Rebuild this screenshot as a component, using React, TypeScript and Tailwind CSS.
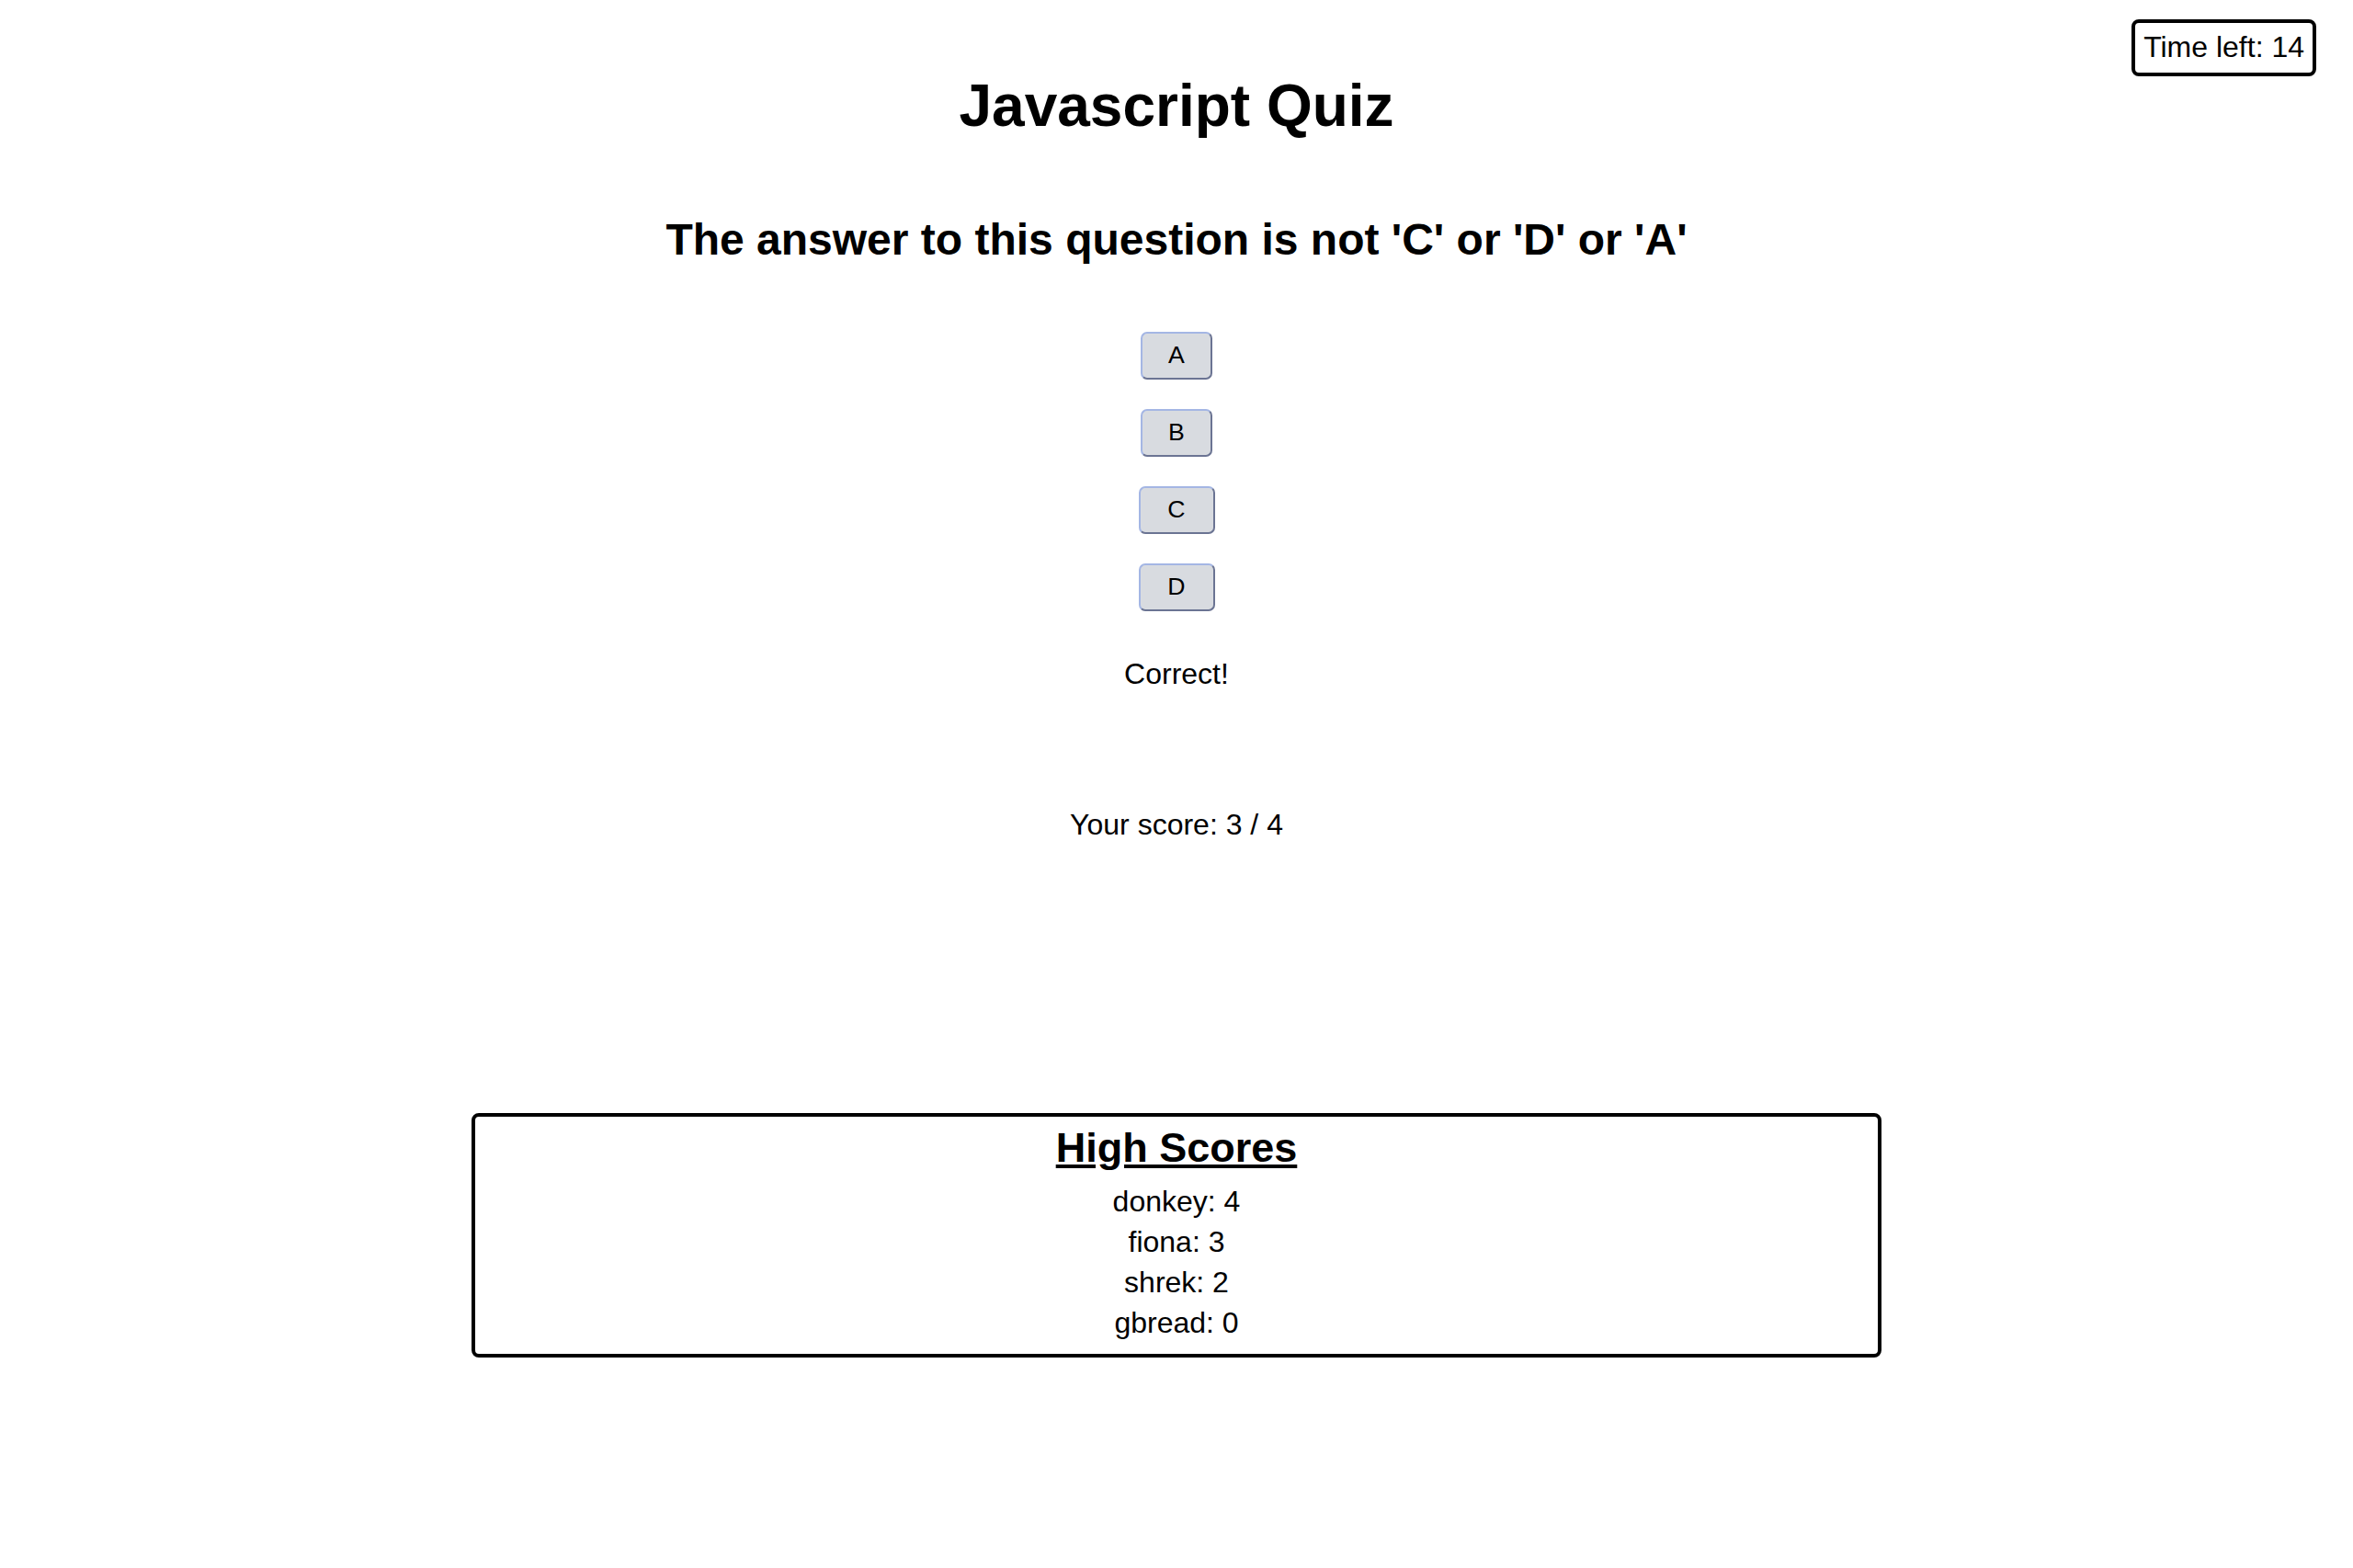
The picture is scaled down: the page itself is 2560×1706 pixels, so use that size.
const choices = [
  { label: "A", width: "w-[78px]" },
  { label: "B", width: "w-[78px]" },
  { label: "C", width: "w-[83px]" },
  { label: "D", width: "w-[83px]" },
];

const highScores = [
  { name: "donkey", score: 4 },
  { name: "fiona", score: 3 },
  { name: "shrek", score: 2 },
  { name: "gbread", score: 0 },
];

export default function App() {
  return (
    <div className="relative min-h-[1706px] bg-white text-black font-['Liberation_Sans',Arial,sans-serif]">
      <div className="absolute top-[21px] right-[40px] border-4 border-black rounded-[8px] pt-[8px] pb-[9px] px-[9px] text-[32px] leading-[36.8px]">
        Time left: 14
      </div>

      <div className="flex flex-col items-center text-center">
        <h1 className="mt-[79px] text-[64px] leading-[73.6px] font-bold">Javascript Quiz</h1>

        <h2 className="mt-[80px] text-[48px] leading-[55.2px] font-bold">
          The answer to this question is not 'C' or 'D' or 'A'
        </h2>

        <div className="mt-[73px] flex flex-col items-center gap-[32px]">
          {choices.map((c) => (
            <button
              key={c.label}
              className={`${c.width} h-[52px] flex items-center justify-center rounded-[7px] border-2 border-t-[#a4b6e4] border-l-[#a4b6e4] border-b-[#6b7493] border-r-[#6b7493] bg-[#d8dbe0] text-[26.67px] leading-none`}
            >
              {c.label}
            </button>
          ))}
        </div>

        <p className="mt-[50px] text-[32px] leading-[36.8px]">Correct!</p>

        <p className="mt-[127px] text-[32px] leading-[36.8px]">Your score: 3 / 4</p>

        <div className="mt-[296px] w-[1534px] border-4 border-black rounded-[8px] pt-[8px] pb-[12px]">
          <h3 className="text-[45px] leading-[51.7px] font-bold underline">High Scores</h3>
          <ul className="mt-[10px]">
            {highScores.map((s) => (
              <li key={s.name} className="text-[32px] leading-[44px]">
                {s.name}: {s.score}
              </li>
            ))}
          </ul>
        </div>
      </div>
    </div>
  );
}
